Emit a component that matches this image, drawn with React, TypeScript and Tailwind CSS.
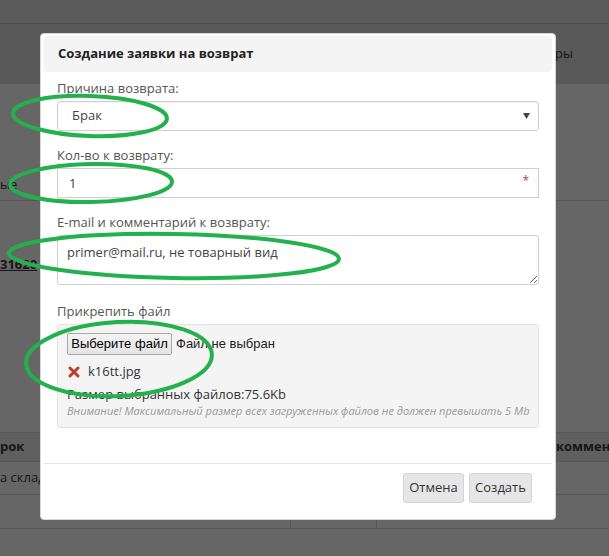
import React from 'react';

const openSans = { fontFamily: '"Open Sans", "Liberation Sans", sans-serif' };

// hand-drawn style marks over the form
const Marks: React.FC = () => (
  <svg className="pointer-events-none absolute left-0 top-0" width="609" height="556" viewBox="0 0 609 556">
    <g fill="none" stroke="#22b14c" strokeWidth="4">
      <ellipse cx="90" cy="116" rx="77" ry="20" transform="rotate(2 90 116)" />
      <ellipse cx="91" cy="183" rx="81" ry="19" transform="rotate(-1 91 183)" />
      <ellipse cx="174" cy="256" rx="165" ry="22" transform="rotate(1 174 256)" />
      <ellipse cx="119" cy="359" rx="93" ry="37" transform="rotate(-3 119 359)" />
    </g>
  </svg>
);

const Background: React.FC = () => (
  <div className="flex flex-col text-[13px] text-[#161616]" style={openSans}>
    <div className="h-[24px] bg-[#5b5b5b] border-b border-[#4c4c4c]" />
    <div className="h-[60px] bg-[#595959] flex items-center pl-[555px]">ры</div>
    <div className="h-[117px] flex items-end pb-[6px] border-b border-[#575757]">
      <span>ые</span>
    </div>
    <div className="h-[231px] pt-[54px]">
      <span className="font-bold underline">31620</span>
    </div>
    <div className="h-[30px] bg-[#5f5f5f] border-y border-[#575757] flex items-center font-bold">
      <span className="w-[524px] shrink-0">рок</span>
      <span className="whitespace-nowrap">ваш коммен</span>
    </div>
    <div className="h-[33px] border-b border-[#575757] flex items-center">
      <span>а складе</span>
    </div>
    <div className="h-[34px] border-b border-[#575757] flex">
      <div className="w-[291px] border-r border-[#575757]" />
      <div className="w-[86px] border-r border-[#575757]" />
    </div>
  </div>
);

const Label: React.FC<{ children: React.ReactNode }> = ({ children }) => (
  <div className="h-[18px] leading-[18px] text-[13px] text-[#555] mb-[4px]">{children}</div>
);

const ReturnModal: React.FC = () => (
  <div
    className="absolute left-[40px] top-[33px] w-[516px] h-[487px] bg-white rounded-[4px] border border-[#d8d8d8] flex flex-col"
    style={openSans}
  >
    <div className="mx-[3px] mt-[2px] h-[36px] bg-[#f4f4f4] rounded-[4px] flex items-center pl-[14px] text-[13px] font-bold text-[#222]">
      Создание заявки на возврат
    </div>

    <div className="px-[16px] pt-[7px]">
      <Label>Причина возврата:</Label>
      <div className="h-[30px] border border-[#cfcfcf] rounded-[3px] shadow-[inset_0_1px_2px_rgba(0,0,0,0.06)] flex items-center justify-between pl-[14px] pr-[8px] text-[13px] text-[#444]">
        <span>Брак</span>
        <svg width="7" height="6" viewBox="0 0 7 6">
          <path d="M0 0h7L3.5 6z" fill="#444" />
        </svg>
      </div>

      <div className="mt-[15px]">
        <Label>Кол-во к возврату:</Label>
        <div className="relative">
          <input
            readOnly
            value="1"
            className="w-full h-[30px] border border-[#cfcfcf] pl-[11px] text-[13px] text-[#444] outline-none"
          />
          <span className="absolute right-[10px] top-[7px] text-[12px] leading-none text-[#a94442]">*</span>
        </div>
      </div>

      <div className="mt-[15px]">
        <Label>E-mail и комментарий к возврату:</Label>
        <textarea
          readOnly
          defaultValue="primer@mail.ru, не товарный вид"
          className="block w-full h-[50px] border border-[#cfcfcf] rounded-[3px] px-[9px] py-[7px] text-[13px] text-[#444] outline-none"
        />
      </div>

      <div className="mt-[17px]">
        <Label>Прикрепить файл</Label>
        <div className="h-[104px] bg-[#f4f4f4] border border-[#e3e3e3] rounded-[3px] pl-[9px] pt-[8px]">
          <div className="flex items-center text-[13px]" style={{ fontFamily: '"Liberation Sans", Arial, sans-serif' }}>
            <button className="h-[22px] w-[105px] border border-[#a8a8a8] rounded-[2px] bg-gradient-to-b from-[#f4f4f4] to-[#e4e4e4] text-black">
              Выберите файл
            </button>
            <span className="ml-[4px] text-[#222]">Файл не выбран</span>
          </div>
          <div className="flex items-center mt-[8px] h-[18px] text-[13px] text-[#333]">
            <svg width="12" height="12" viewBox="0 0 12 12" className="ml-[1px] mr-[8px]">
              <path d="M2 2L10 10M10 2L2 10" stroke="#c0392b" strokeWidth="3" strokeLinecap="round" />
            </svg>
            k16tt.jpg
          </div>
          <div className="mt-[4px] h-[18px] leading-[18px] text-[13px] text-[#333]">Размер выбранных файлов:75.6Kb</div>
          <div className="h-[16px] leading-[16px] text-[11px] italic text-[#999]">
            Внимание! Максимальный размер всех загруженных файлов не должен превышать 5 Mb
          </div>
        </div>
      </div>
    </div>

    <div className="mx-[3px] mt-[35px] border-t border-[#e5e5e5]" />
    <div className="flex justify-end gap-[5px] pr-[23px] pt-[9px]">
      <button className="h-[30px] w-[61px] bg-[#e6e6e6] border border-[#d4d4d4] rounded-[3px] text-[13px] text-[#333]">
        Отмена
      </button>
      <button className="h-[30px] w-[63px] bg-[#e6e6e6] border border-[#d4d4d4] rounded-[3px] text-[13px] text-[#333]">
        Создать
      </button>
    </div>
  </div>
);

export default function App() {
  return (
    <div className="relative w-[609px] h-[556px] overflow-hidden bg-[#666]">
      <Background />
      <ReturnModal />
      <Marks />
    </div>
  );
}
